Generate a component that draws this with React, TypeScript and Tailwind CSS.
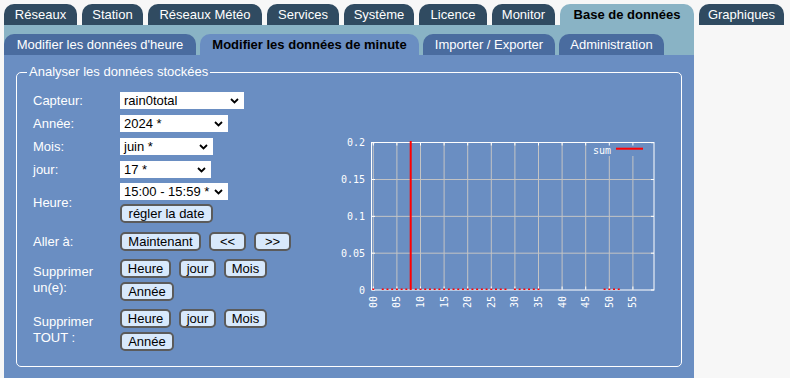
import React from "react";

const topTabs = [
  { label: "Réseaux", w: "w-[73px]" },
  { label: "Station", w: "w-[61px]" },
  { label: "Réseaux Météo", w: "w-[114px]" },
  { label: "Services", w: "w-[72px]" },
  { label: "Système", w: "w-[70px]" },
  { label: "Licence", w: "w-[68px]" },
  { label: "Monitor", w: "w-[63px]" },
  { label: "Base de données", w: "w-[134px]", active: true },
  { label: "Graphiques", w: "w-[85px]" },
];

const subTabs = [
  { label: "Modifier les données d'heure", w: "w-[192px]" },
  { label: "Modifier les données de minute", w: "w-[219px]", active: true },
  { label: "Importer / Exporter", w: "w-[132px]" },
  { label: "Administration", w: "w-[105px]" },
];

function Select({ value, className }: { value: string; className: string }) {
  return (
    <div className={`flex h-[17px] items-center justify-between bg-white pl-[4px] pr-[5px] text-[13px] text-black ${className}`}>
      <span>{value}</span>
      <svg width="9" height="6" viewBox="0 0 9 6" className="ml-[3px]">
        <path d="M1 1l3.5 3.5L8 1" fill="none" stroke="#000" strokeWidth="1.8" />
      </svg>
    </div>
  );
}

function Btn({ children, className = "" }: { children: React.ReactNode; className?: string }) {
  return (
    <button className={`flex h-[19px] items-center justify-center rounded-[5px] border-2 border-[#5b5b5b] bg-[#d8e9fc] px-[4px] text-[13px] leading-none text-black ${className}`}>
      {children}
    </button>
  );
}

function Row({ label, children, className = "" }: { label: React.ReactNode; children: React.ReactNode; className?: string }) {
  return (
    <div className={`flex items-center ${className}`}>
      <div className="w-[87px] leading-4 text-white">{label}</div>
      <div className="flex flex-1 flex-col gap-[4px]">{children}</div>
    </div>
  );
}

const X = (m: number) => 43.3 + m * 4.72;
const Y = (v: number) => 160 - (v / 0.2) * 147.3;
const dots = [0, 2, 3, 4, 5, 6, 7, ...Array.from({ length: 20 }, (_, i) => i + 9), 30, 31, 32, 33, 34, 35, 49, 50, 51, 52];

function Chart() {
  const xs = [0, 5, 10, 15, 20, 25, 30, 35, 40, 45, 50, 55];
  const ys = [0, 0.05, 0.1, 0.15, 0.2];
  return (
    <svg width="330" height="190" className="mt-[38px] shrink-0" style={{ fontFamily: "'DejaVu Sans Mono', monospace" }}>
      {xs.map((m) => (
        <line key={m} x1={X(m)} x2={X(m)} y1={m >= 50 ? 26 : 12.5} y2={160} stroke="#c4c4c4" strokeWidth="1" />
      ))}
      {ys.slice(1, 4).map((v) => (
        <line key={v} x1={42} x2={324} y1={Y(v)} y2={Y(v)} stroke="#c4c4c4" strokeWidth="1" />
      ))}
      {xs.map((m) => (
        <g key={"t" + m}>
          <line x1={X(m)} x2={X(m)} y1={12.5} y2={15.5} stroke="#fff" />
          <line x1={X(m)} x2={X(m)} y1={156.5} y2={159.5} stroke="#fff" />
        </g>
      ))}
      {ys.map((v) => (
        <g key={"u" + v}>
          <line x1={42} x2={45} y1={Y(v)} y2={Y(v)} stroke="#fff" />
          <line x1={321} x2={324} y1={Y(v)} y2={Y(v)} stroke="#fff" />
        </g>
      ))}
      <rect x={41.5} y={12.5} width={282.5} height={147.5} fill="none" stroke="#fff" strokeWidth="1" />
      {dots.map((m) => (
        <rect key={"d" + m} x={X(m) - 1} y={158.5} width={2} height={1.5} fill="#ff0000" />
      ))}
      <rect x={79.7} y={11} width={2} height={149} fill="#ff0000" />
      <text x={281} y={24} textAnchor="end" fontSize="10" fill="#fff">sum</text>
      <rect x={286} y={17.7} width={27} height={2} fill="#ff0000" />
      {ys.map((v) => (
        <text key={"l" + v} x={35} y={Y(v) + 3.5} textAnchor="end" fontSize="10" fill="#fff">
          {v === 0 ? "0" : String(v)}
        </text>
      ))}
      {xs.map((m) => (
        <text key={"x" + m} transform={`translate(${X(m) + 3.5},166) rotate(-90)`} textAnchor="end" fontSize="10" fill="#fff">
          {String(m).padStart(2, "0")}
        </text>
      ))}
    </svg>
  );
}

export default function App() {
  return (
    <div className="min-h-screen bg-[#f7f7f7] pl-[4px] pt-[4px] font-['Liberation_Sans',Arial,sans-serif] text-[13px]">
      <div className="flex h-[21px] gap-[5px]">
        {topTabs.map((t) => (
          <div
            key={t.label}
            className={`flex ${t.w} items-center justify-center rounded-t-[10px] ${t.active ? "bg-[#89b3c5] font-bold text-black" : "bg-[#304b61] text-white"}`}
          >
            {t.label}
          </div>
        ))}
      </div>
      <div className="w-[690px] bg-[#89b3c5] pt-[9px]">
        <div className="flex h-[21px] gap-[4px]">
          {subTabs.map((t) => (
            <div
              key={t.label}
              className={`flex ${t.w} items-center justify-center rounded-t-[10px] ${t.active ? "bg-[#6a8ec2] font-bold text-black" : "bg-[#4a6c9f] text-white"}`}
            >
              {t.label}
            </div>
          ))}
        </div>
      </div>
      <div className="w-[690px] bg-[#6a8ec2] px-[12px] pb-[12px] pt-[9px]">
        <fieldset className="rounded-[5px] border border-white px-[10px] pb-[15px] pt-[12px]">
          <legend className="px-[2px] leading-4 text-white">Analyser les données stockées</legend>
          <div className="flex pl-[6px]">
            <div className="flex w-[297px] flex-col">
              <Row label="Capteur:">
                <Select value="rain0total" className="w-[124px]" />
              </Row>
              <Row label="Année:" className="mt-[6px]">
                <Select value="2024 *" className="w-[108px]" />
              </Row>
              <Row label="Mois:" className="mt-[6px]">
                <Select value="juin *" className="w-[93px]" />
              </Row>
              <Row label="jour:" className="mt-[6px]">
                <Select value="17 *" className="w-[91px]" />
              </Row>
              <Row label="Heure:" className="mt-[5px]">
                <Select value="15:00 - 15:59 *" className="w-[108px] pr-[3px]" />
                <div className="flex">
                  <Btn className="w-[93px]">régler la date</Btn>
                </div>
              </Row>
              <Row label="Aller à:" className="mt-[9px]">
                <div className="flex gap-[8px]">
                  <Btn className="w-[81px]">Maintenant</Btn>
                  <Btn className="w-[37px]">&lt;&lt;</Btn>
                  <Btn className="w-[37px]">&gt;&gt;</Btn>
                </div>
              </Row>
              <Row label={<>Supprimer<br />un(e):</>} className="mt-[8px]">
                <div className="flex gap-[8px]">
                  <Btn className="w-[51px]">Heure</Btn>
                  <Btn className="w-[37px]">jour</Btn>
                  <Btn className="w-[43px]">Mois</Btn>
                </div>
                <div className="flex">
                  <Btn className="w-[54px]">Année</Btn>
                </div>
              </Row>
              <Row label={<>Supprimer<br />TOUT :</>} className="mt-[8px]">
                <div className="flex gap-[8px]">
                  <Btn className="w-[51px]">Heure</Btn>
                  <Btn className="w-[37px]">jour</Btn>
                  <Btn className="w-[43px]">Mois</Btn>
                </div>
                <div className="flex">
                  <Btn className="w-[54px]">Année</Btn>
                </div>
              </Row>
            </div>
            <Chart />
          </div>
        </fieldset>
      </div>
    </div>
  );
}
